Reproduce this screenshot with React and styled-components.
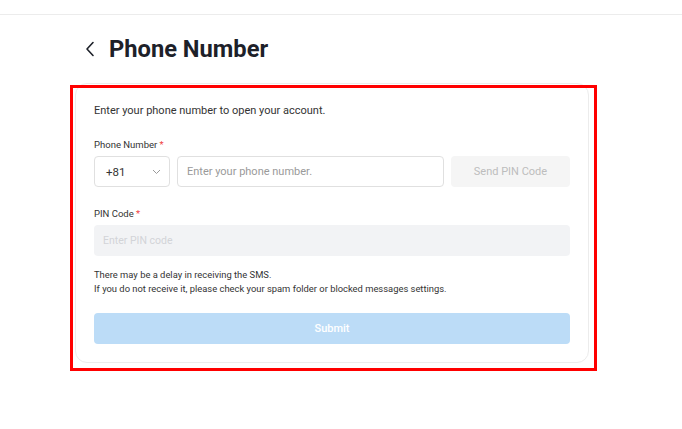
import React from 'react';
import styled, { createGlobalStyle } from 'styled-components';

const GlobalStyle = createGlobalStyle`
  body {
    margin: 0;
    background: #ffffff;
    font-family: Roboto, "Liberation Sans", sans-serif;
    color: #333333;
  }
`;

const Page = styled.div`
  position: relative;
  width: 682px;
  height: 429px;
  overflow: hidden;
`;

const TopBar = styled.div`
  height: 14px;
  border-bottom: 1px solid #ececec;
`;

const Main = styled.div`
  width: 514px;
  margin-left: 75px;
`;

const Header = styled.div`
  display: flex;
  align-items: center;
  height: 28px;
  margin-top: 20px;
  padding-left: 10px;
  gap: 14px;
`;

const Title = styled.h1`
  margin: 0;
  font-size: 23.7px;
  font-weight: 700;
  color: #1d2129;
`;

const Card = styled.div`
  margin-top: 20px;
  border: 1px solid #ececec;
  border-radius: 12px;
  padding: 19px 18px 18px;
`;

const Intro = styled.p`
  margin: 0;
  font-size: 11px;
  line-height: 16px;
  color: #333;
`;

const Label = styled.div`
  margin-top: ${p => p.$top}px;
  margin-bottom: 4px;
  font-size: 9.5px;
  line-height: 14px;
  color: #333;

  span {
    color: #f03e3e;
  }
`;

const Row = styled.div`
  display: flex;
  gap: 7px;
`;

const Select = styled.div`
  box-sizing: border-box;
  width: 76px;
  height: 31px;
  border: 1px solid #e0e0e0;
  border-radius: 4px;
  display: flex;
  align-items: center;
  justify-content: space-between;
  padding: 0 8px 0 11px;
  font-size: 11.5px;
  color: #333;
`;

const Input = styled.input`
  box-sizing: border-box;
  height: 31px;
  flex: ${p => (p.$grow ? 1 : 'none')};
  width: ${p => (p.$grow ? 'auto' : '100%')};
  border: ${p => (p.$disabled ? 'none' : '1px solid #e0e0e0')};
  background: ${p => (p.$disabled ? '#f2f3f5' : '#fff')};
  border-radius: 4px;
  padding: 0 9px;
  font-family: inherit;
  font-size: ${p => (p.$disabled ? '10.5px' : '11px')};
  outline: none;

  &::placeholder {
    color: ${p => (p.$disabled ? '#d2d4d8' : '#9a9a9a')};
  }
`;

const SendButton = styled.button`
  width: 119px;
  height: 31px;
  border: none;
  border-radius: 4px;
  background: #f5f5f5;
  color: #bdbdbd;
  font-family: inherit;
  font-size: 11px;
`;

const Help = styled.p`
  margin: 12px 0 0;
  font-size: 9.4px;
  line-height: 14px;
  color: #333;
`;

const Submit = styled.button`
  display: block;
  width: 100%;
  height: 31px;
  margin-top: 17px;
  border: none;
  border-radius: 4px;
  background: #bcdcf7;
  color: #ffffff;
  font-family: inherit;
  font-size: 11px;
  font-weight: 500;
`;

const Highlight = styled.div`
  position: absolute;
  left: 70px;
  top: 85px;
  width: 527px;
  height: 286px;
  box-sizing: border-box;
  border: 3px solid #ff0000;
  pointer-events: none;
`;

const Chevron = () => (
  <svg width="10" height="16" viewBox="0 0 10 16" fill="none">
    <path d="M8 1.5 L2 8 L8 14.5" stroke="#1d2129" strokeWidth="1.6" strokeLinecap="round" strokeLinejoin="round" />
  </svg>
);

const Caret = () => (
  <svg width="9" height="6" viewBox="0 0 9 6" fill="none">
    <path d="M1 1 L4.5 4.5 L8 1" stroke="#9a9a9a" strokeWidth="1" />
  </svg>
);

export default function App() {
  return (
    <Page>
      <GlobalStyle />
      <TopBar />
      <Main>
        <Header>
          <Chevron />
          <Title>Phone Number</Title>
        </Header>
        <Card>
          <Intro>Enter your phone number to open your account.</Intro>
          <Label $top={19}>Phone Number <span>*</span></Label>
          <Row>
            <Select>
              +81
              <Caret />
            </Select>
            <Input $grow placeholder="Enter your phone number." />
            <SendButton>Send PIN Code</SendButton>
          </Row>
          <Label $top={20}>PIN Code <span>*</span></Label>
          <Input $disabled placeholder="Enter PIN code" disabled />
          <Help>
            There may be a delay in receiving the SMS.
            <br />
            If you do not receive it, please check your spam folder or blocked messages settings.
          </Help>
          <Submit>Submit</Submit>
        </Card>
      </Main>
      <Highlight />
    </Page>
  );
}
